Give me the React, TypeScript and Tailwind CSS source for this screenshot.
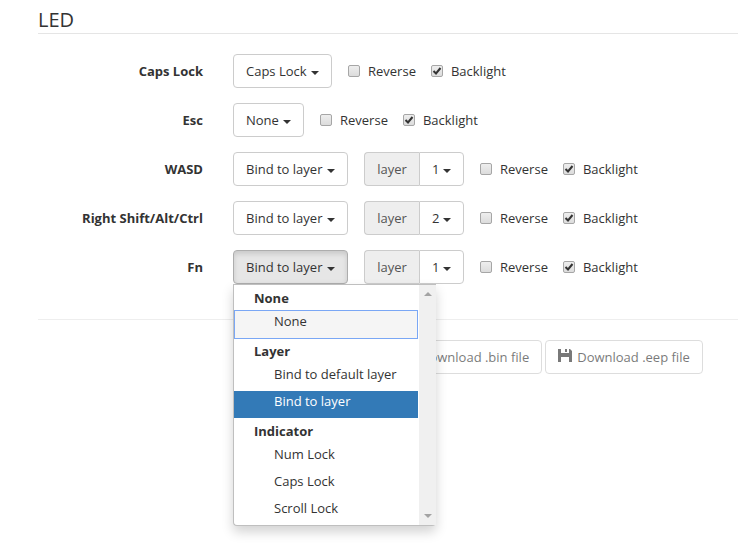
import { useState } from "react";

const modes = ["None", "Bind to default layer", "Bind to layer", "Num Lock", "Caps Lock", "Scroll Lock"];

const groups = [
  { title: "None", items: ["None"] },
  { title: "Layer", items: ["Bind to default layer", "Bind to layer"] },
  { title: "Indicator", items: ["Num Lock", "Caps Lock", "Scroll Lock"] },
];

const rows = [
  { name: "Caps Lock", mode: "Caps Lock", width: "w-[99px]" },
  { name: "Esc", mode: "None", width: "w-[71px]" },
  { name: "WASD", mode: "Bind to layer", width: "w-[115px]", layer: "1" },
  { name: "Right Shift/Alt/Ctrl", mode: "Bind to layer", width: "w-[115px]", layer: "2" },
  { name: "Fn", mode: "Bind to layer", width: "w-[115px]", layer: "1", menu: true },
];

function Caret() {
  return (
    <svg
      viewBox="0 0 8 4"
      className="pointer-events-none absolute right-[13px] top-[17px] h-1 w-2 fill-[#333]"
      aria-hidden="true"
    >
      <path d="M0 0h8L4 4z" />
    </svg>
  );
}

function Picker({ label, value, options, className }: { label: string; value: string; options: string[]; className: string }) {
  return (
    <div className="relative">
      <select
        aria-label={label}
        defaultValue={value}
        className={`block h-[34px] appearance-none border border-[#ccc] bg-white pl-3 leading-5 ${className}`}
      >
        {options.map((o) => (
          <option key={o}>{o}</option>
        ))}
      </select>
      <Caret />
    </div>
  );
}

function Check({ text, checked }: { text: string; checked?: boolean }) {
  return (
    <label className="flex items-center gap-2">
      <span className="grid">
        <input
          type="checkbox"
          defaultChecked={checked}
          className="peer col-start-1 row-start-1 size-3 appearance-none rounded-xs border border-[#a6a6a6] bg-linear-to-b from-[#eee] to-[#dcdcdc]"
        />
        <svg
          viewBox="0 0 12 12"
          className="pointer-events-none invisible col-start-1 row-start-1 size-3 fill-none stroke-[#333] stroke-2 peer-checked:visible"
          aria-hidden="true"
        >
          <path d="M2.5 6L5 8.5L9.5 3" />
        </svg>
      </span>
      {text}
    </label>
  );
}

function Menu() {
  return (
    <div className="absolute left-0 top-full z-10 flex w-[203px] rounded-b-sm border border-r-0 border-[#bfbfbf] bg-white shadow-[0_6px_12px_rgba(0,0,0,0.175)]">
      <div role="listbox" aria-label="Fn mode" className="grow">
        {groups.map((g) => (
          <div key={g.title} role="group" aria-label={g.title}>
            <div className="pl-5 font-bold leading-[26px]">{g.title}</div>
            {g.items.map((item) => (
              <div
                key={item}
                role="option"
                aria-selected={item === "Bind to layer"}
                className={`h-[27px] leading-5 ${
                  item === "Bind to layer"
                    ? "mr-px bg-[#337ab7] pl-10 text-white"
                    : item === "None"
                      ? "ml-px mr-0.5 bg-[#f5f5f5] pl-[39px] outline outline-[#7aa7f5]"
                      : "pl-10"
                }`}
              >
                {item}
              </div>
            ))}
          </div>
        ))}
      </div>
      <div className="flex w-[17px] flex-col items-center justify-between bg-[#f0f0f0] py-[7px]" aria-hidden="true">
        <svg viewBox="0 0 8 4" className="h-1 w-2 fill-[#a3a3a3]">
          <path d="M0 4h8L4 0z" />
        </svg>
        <svg viewBox="0 0 8 4" className="h-1 w-2 fill-[#a3a3a3]">
          <path d="M0 0h8L4 4z" />
        </svg>
      </div>
    </div>
  );
}

function Download({ text }: { text: string }) {
  return (
    <button
      type="button"
      disabled
      className="flex h-[34px] shrink-0 items-center gap-[5px] whitespace-nowrap rounded-sm border border-[#ccc] px-3 opacity-65"
    >
      <svg viewBox="0 0 14 16" className="h-4 w-3.5 fill-[#333]" aria-hidden="true">
        <path fillRule="evenodd" d="M0 0h3v4h8V0h1l2 2v11h-3V8H3v5H0zM7 0h2v3H7z" />
      </svg>
      {text}
    </button>
  );
}

export default function App() {
  const [open, setOpen] = useState(true);
  return (
    <main className="min-h-screen bg-white pl-[38px] font-['Open_Sans','Noto_Sans',sans-serif] text-[13px] leading-5 text-[#333]">
      <h2 className="mb-5 border-b border-[#e5e5e5] pt-1.5 text-[20px] leading-[27px]">LED</h2>
      <form>
        <div className="flex flex-col gap-[15px]">
          {rows.map((r) => (
            <div key={r.name} className="flex items-center" role="group" aria-label={r.name}>
              <div className="mr-[30px] w-[165px] text-right font-bold">{r.name}</div>
              {r.menu ? (
                <div className="relative">
                  <button
                    type="button"
                    aria-haspopup="listbox"
                    aria-expanded={open}
                    onClick={() => setOpen(!open)}
                    className="block h-[34px] w-[115px] rounded-sm border border-[#adadad] bg-[#e6e6e6] pl-3 text-left shadow-[inset_0_3px_5px_rgba(0,0,0,0.125)]"
                  >
                    {r.mode}
                  </button>
                  <Caret />
                  {open && <Menu />}
                </div>
              ) : (
                <Picker label={`${r.name} mode`} value={r.mode} options={modes} className={`rounded-sm ${r.width}`} />
              )}
              {r.layer && (
                <div className="ml-4 flex">
                  <span className="flex h-[34px] w-[55px] items-center justify-center rounded-l-sm border border-r-0 border-[#ccc] bg-[#eee] text-[#555]">
                    layer
                  </span>
                  <Picker label={`${r.name} layer`} value={r.layer} options={["1", "2", "3"]} className="w-[45px] rounded-r-sm" />
                </div>
              )}
              <div className="ml-4 flex gap-[15px]">
                <Check text="Reverse" />
                <Check text="Backlight" checked />
              </div>
            </div>
          ))}
        </div>
        <hr className="mb-5 mt-[35px] border-[#eee]" />
        <div className="ml-[195px] flex gap-[3px]">
          <button type="button" disabled aria-label="Save" className="h-[34px] w-[152px] shrink-0 rounded-sm border border-[#ccc] opacity-65" />
          <Download text="Download .bin file" />
          <Download text="Download .eep file" />
        </div>
      </form>
    </main>
  );
}
